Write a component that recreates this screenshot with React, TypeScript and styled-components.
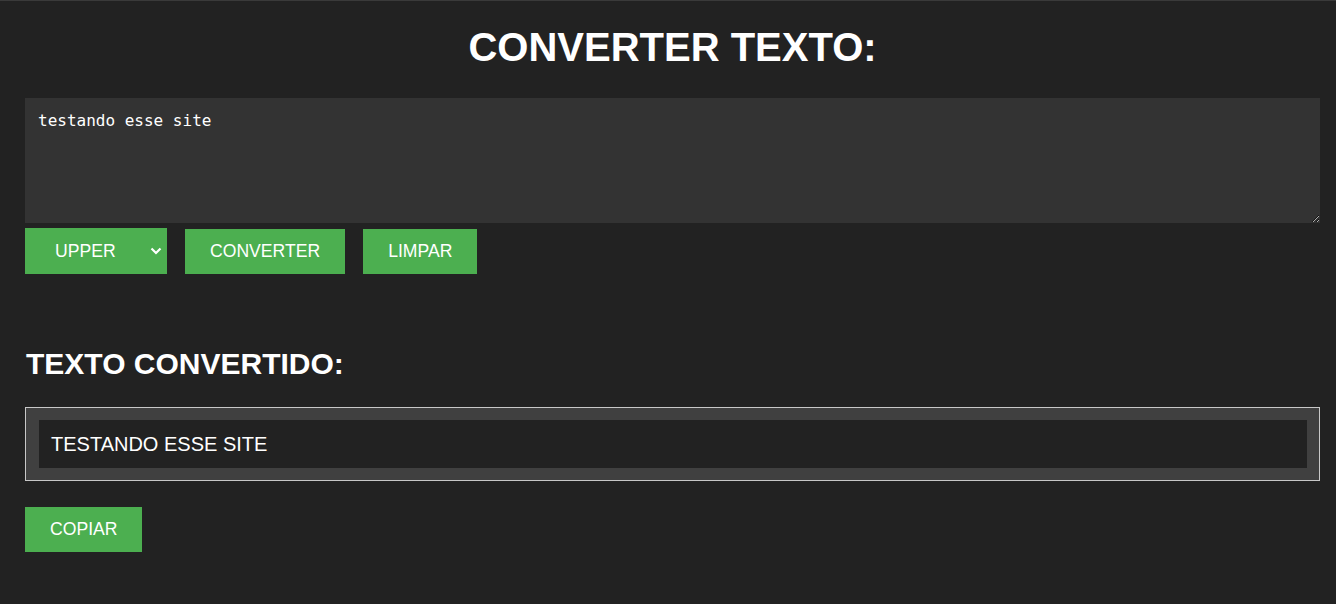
import React, { useState } from "react";
import styled, { createGlobalStyle } from "styled-components";

const GlobalStyle = createGlobalStyle`
  html, body {
    margin: 0;
    padding: 0;
    background: #222222;
  }
  body {
    font-family: "Liberation Sans", Arial, sans-serif;
    color: #ffffff;
    border-top: 1px solid #3a3a3a;
  }
`;

const Page = styled.main`
  padding: 23px 16px 0 25px;
  min-height: 580px;
`;

const Title = styled.h1`
  margin: 0 0 28px;
  font-size: 40px;
  font-weight: 700;
  text-align: center;
  line-height: 46px;
`;

const Input = styled.textarea`
  display: block;
  box-sizing: border-box;
  width: 100%;
  height: 125px;
  margin: 0 0 5px;
  padding: 13px 13px;
  background: #333333;
  color: #ffffff;
  border: none;
  outline: none;
  font-family: "DejaVu Sans Mono", "Liberation Mono", monospace;
  font-size: 16px;
  line-height: 19px;
  resize: vertical;
`;

const Controls = styled.div`
  display: flex;
  align-items: flex-end;
  gap: 18px;
`;

const SelectWrap = styled.div`
  position: relative;
  width: 142px;
  height: 46px;
`;

const Select = styled.select`
  appearance: none;
  box-sizing: border-box;
  width: 100%;
  height: 100%;
  padding: 0 0 0 30px;
  background: #4caf50;
  color: #ffffff;
  border: none;
  outline: none;
  font-family: "Liberation Sans", Arial, sans-serif;
  font-size: 17.6px;
  cursor: pointer;
`;

const Chevron = styled.svg`
  position: absolute;
  right: 5px;
  top: 19px;
  width: 12px;
  height: 8px;
  pointer-events: none;
`;

const Button = styled.button`
  box-sizing: border-box;
  height: 45px;
  padding: 0 25px;
  background: #4caf50;
  color: #ffffff;
  border: none;
  font-family: "Liberation Sans", Arial, sans-serif;
  font-size: 17.6px;
  cursor: pointer;
`;

const Subtitle = styled.h2`
  margin: 73px 0 26px 1px;
  font-size: 30px;
  font-weight: 700;
  line-height: 34px;
`;

const OutputBox = styled.div`
  box-sizing: border-box;
  border: 1px solid #c8c8c8;
  background: #404040;
  padding: 12px 12px 12px 13px;
  margin-bottom: 26px;
`;

const OutputText = styled.div`
  box-sizing: border-box;
  height: 48px;
  padding: 0 12px;
  display: flex;
  align-items: center;
  background: #222222;
  font-size: 20px;
`;

export default function App() {
  const [text, setText] = useState("testando esse site");
  return (
    <>
      <GlobalStyle />
      <Page>
        <Title>CONVERTER TEXTO:</Title>
        <Input value={text} onChange={(e) => setText(e.target.value)} />
        <Controls>
          <SelectWrap>
            <Select defaultValue="upper">
              <option value="upper">UPPER</option>
              <option value="lower">LOWER</option>
            </Select>
            <Chevron viewBox="0 0 12 8">
              <path d="M1.5 1.5 L6 6 L10.5 1.5" stroke="#ffffff" strokeWidth="2.2" fill="none" />
            </Chevron>
          </SelectWrap>
          <Button>CONVERTER</Button>
          <Button>LIMPAR</Button>
        </Controls>
        <Subtitle>TEXTO CONVERTIDO:</Subtitle>
        <OutputBox>
          <OutputText>{text.toUpperCase()}</OutputText>
        </OutputBox>
        <Button>COPIAR</Button>
      </Page>
    </>
  );
}
